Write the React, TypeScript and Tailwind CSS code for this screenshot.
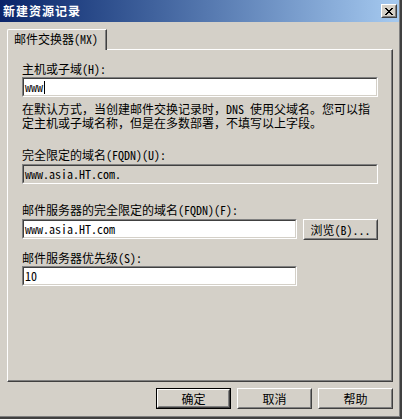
import React from "react";

function Field({ w, children, disabled }: { w: string; children?: React.ReactNode; disabled?: boolean }) {
  return (
    <div className={`${w} h-[20px] border border-t-[#808080] border-l-[#808080] border-b-white border-r-white`}>
      <div
        className={`h-full border border-t-[#404040] border-l-[#404040] border-b-[#d4d0c8] border-r-[#d4d0c8] ${
          disabled ? "bg-[#d4d0c8]" : "bg-white"
        } flex items-center pl-[1px] text-[12px] leading-[14px] text-black`}
      >
        {children}
      </div>
    </div>
  );
}

function Btn({ children, def, w = "w-[75px]", h = "h-[21px]" }: { children: React.ReactNode; def?: boolean; w?: string; h?: string }) {
  const inner = (
    <div className="h-full w-full border border-t-white border-l-white border-b-[#404040] border-r-[#404040]">
      <div className="h-full w-full border border-t-[#d4d0c8] border-l-[#d4d0c8] border-b-[#808080] border-r-[#808080] flex items-center justify-center text-[12px] leading-[14px] text-black">
        {children}
      </div>
    </div>
  );
  if (def) {
    return <div className={`${w} ${h} border border-black`}>{inner}</div>;
  }
  return <div className={`${w} ${h}`}>{inner}</div>;
}

export default function App() {
  return (
    <div className="w-[402px] h-[419px] border-r-2 border-b-2 border-r-[#404040] border-b-[#404040] bg-[#d4d0c8] font-['Noto_Sans_Mono_CJK_SC','Noto_Sans_CJK_SC',sans-serif] overflow-hidden">
      <div className="h-full w-full border-r border-b border-r-[#808080] border-b-[#808080] flex flex-col">
        {/* Title bar */}
        <div className="h-[22px] w-full flex items-center justify-between bg-gradient-to-r from-[#0a246a] to-[#a6caf0] pl-[3px] pr-[2px]">
          <span className="text-white font-bold text-[12px] leading-[14px] tracking-[1px]">新建资源记录</span>
          <div className="w-[16px] h-[14px] border border-t-white border-l-white border-b-[#404040] border-r-[#404040] bg-[#d4d0c8]">
            <div className="h-full w-full border border-t-[#d4d0c8] border-l-[#d4d0c8] border-b-[#808080] border-r-[#808080] flex items-center justify-center">
              <svg width="8" height="7" viewBox="0 0 8 7" shapeRendering="crispEdges">
                <path d="M0 0h2v1h-2zM6 0h2v1h-2zM1 1h2v1h-2zM5 1h2v1h-2zM2 2h4v1h-4zM3 3h2v1h-2zM2 4h4v1h-4zM1 5h2v1h-2zM5 5h2v1h-2zM0 6h2v1h-2zM6 6h2v1h-2z" fill="#000" />
              </svg>
            </div>
          </div>
        </div>

        {/* Tab area */}
        <div className="ml-[7px] mt-[7px] w-[386px] flex flex-col">
          <div className="relative z-10 -mb-[1px] w-[100px] h-[21px] bg-[#d4d0c8] border-l border-t border-r border-l-white border-t-white border-r-[#404040] rounded-tl-[2px] shadow-[inset_-1px_0_0_#808080] pl-[6px] pt-[2px] text-[12px] leading-[14px] text-black">
            邮件交换器(MX)
          </div>
          <div className="h-[333px] border border-l-white border-t-white border-r-[#404040] border-b-[#404040] shadow-[inset_-1px_-1px_0_#808080] pt-[12px] pl-[14px] text-[12px] leading-[14px] text-black">
            <div className="h-[14px]">主机或子域(H):</div>
            <div className="mt-[1px]">
              <Field w="w-[356px]">
                <span>www</span>
                <span className="inline-block w-[1px] h-[13px] bg-black ml-[1px]" />
              </Field>
            </div>
            <div className="mt-[5px] whitespace-nowrap">
              在默认方式，当创建邮件交换记录时，DNS 使用父域名。您可以指
              <br />
              定主机或子域名称，但是在多数部署，不填写以上字段。
            </div>
            <div className="mt-[18px] h-[14px]">完全限定的域名(FQDN)(U):</div>
            <div className="mt-[2px]">
              <Field w="w-[356px]" disabled>
                <span>www.asia.HT.com.</span>
              </Field>
            </div>
            <div className="mt-[19px] h-[14px]">邮件服务器的完全限定的域名(FQDN)(F):</div>
            <div className="mt-[2px] flex items-start gap-[6px]">
              <Field w="w-[275px]">
                <span>www.asia.HT.com</span>
              </Field>
              <Btn>浏览(B)...</Btn>
            </div>
            <div className="mt-[11px] h-[14px]">邮件服务器优先级(S):</div>
            <div className="mt-[1px]">
              <Field w="w-[275px]">
                <span>10</span>
              </Field>
            </div>
          </div>
        </div>

        {/* Buttons */}
        <div className="mt-[6px] ml-[156px] flex gap-[6px]">
          <Btn def>确定</Btn>
          <Btn>取消</Btn>
          <Btn>帮助</Btn>
        </div>
      </div>
    </div>
  );
}
